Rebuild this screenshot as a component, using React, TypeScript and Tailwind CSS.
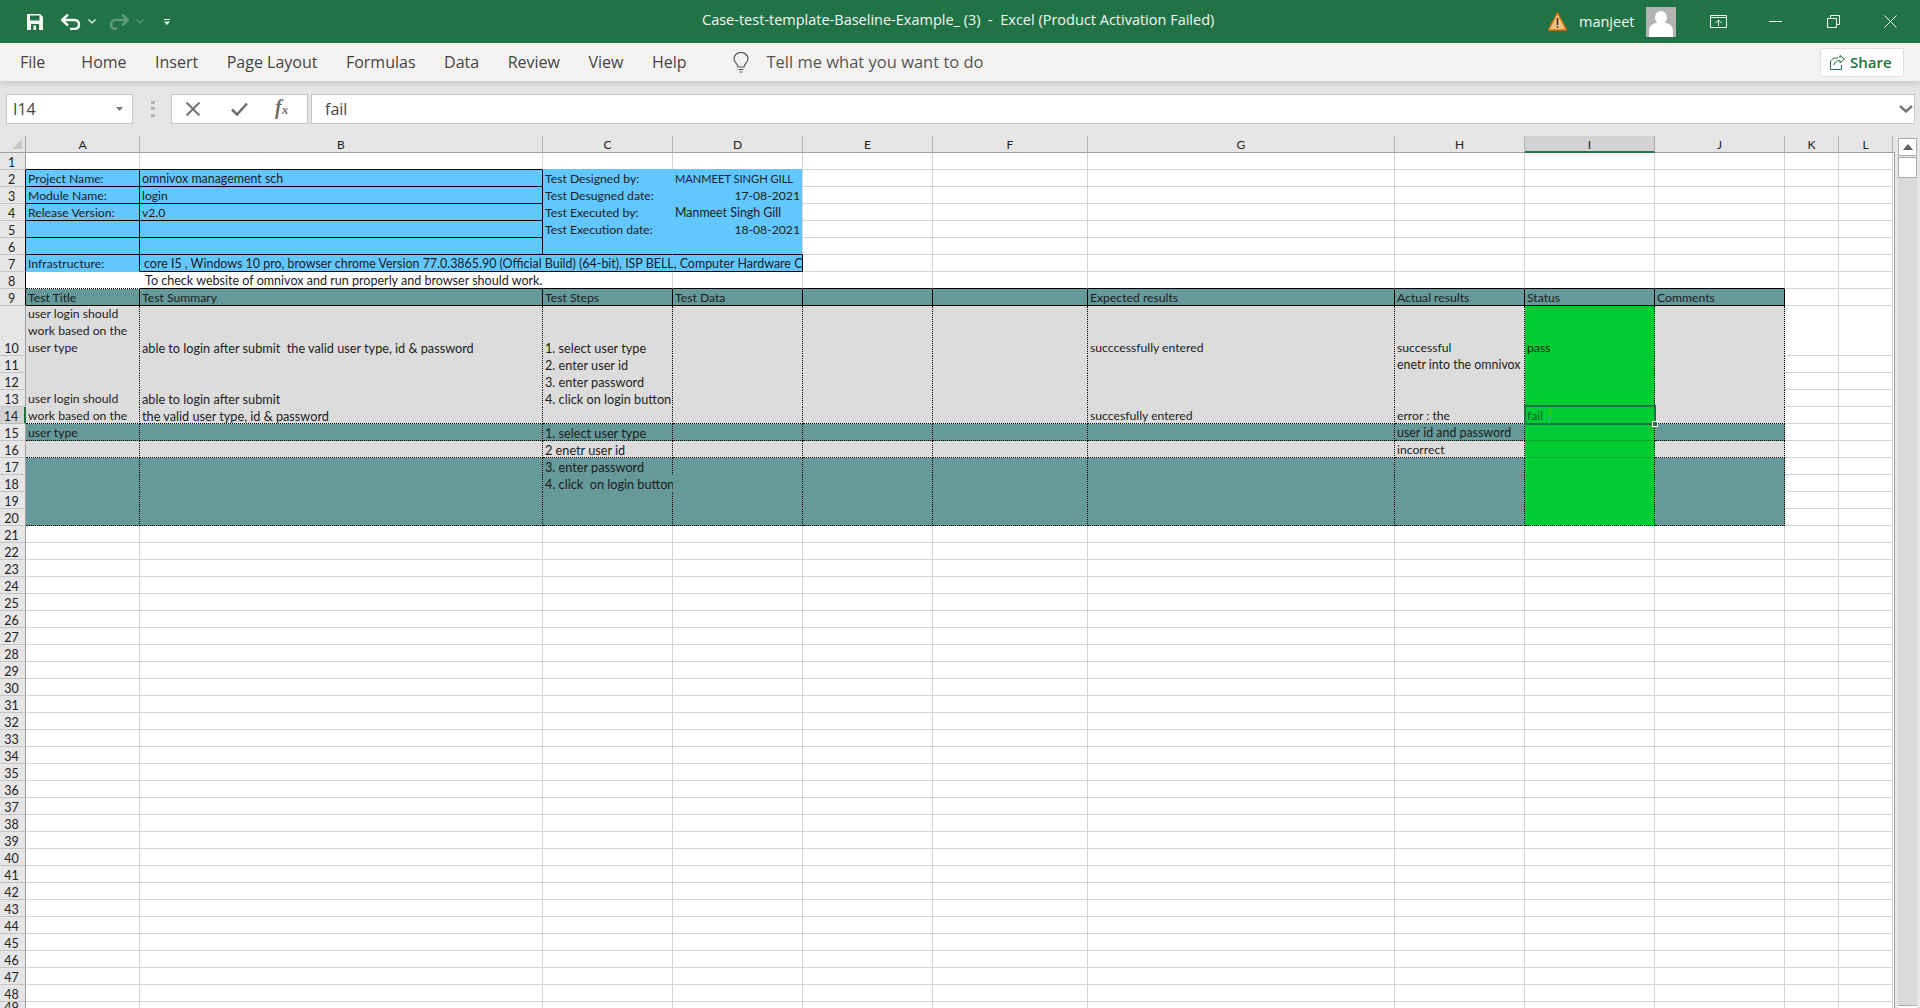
import React from "react";

const LETTERS = ["A", "B", "C", "D", "E", "F", "G", "H", "I", "J", "K", "L"];
const ROWS = Array.from({ length: 49 }, (_, i) => i + 1);

const BLUE = "bg-[#63c7ff]";
const TEAL = "bg-[#669999]";
const GRAY = "bg-[#dcdcdc]";
const GREEN = "bg-[#00cc33]";

type CellDef = { t?: string; right?: boolean; pad?: string; span?: string; clip?: boolean; size?: string };

const BIG = "text-[12.7px]";

const DATA: Record<string, CellDef> = {
  "2-0": { t: "Project Name:" },
  "3-0": { t: "Module Name:" },
  "4-0": { t: "Release Version:" },
  "7-0": { t: "Infrastructure:" },
  "2-1": { t: "omnivox management sch", size: "text-[12.4px]" },
  "3-1": { t: "login" },
  "4-1": { t: "v2.0" },
  "2-2": { t: "Test Designed by:" },
  "3-2": { t: "Test Desugned date:" },
  "4-2": { t: "Test Executed by:" },
  "5-2": { t: "Test Execution date:" },
  "2-3": { t: "MANMEET SINGH GILL", size: "text-[11.1px]" },
  "3-3": { t: "17-08-2021", right: true },
  "4-3": { t: "Manmeet Singh Gill", size: "text-[12.4px]" },
  "5-3": { t: "18-08-2021", right: true },
  "7-1": {
    t: "core I5 , Windows 10 pro, browser chrome Version 77.0.3865.90 (Official Build) (64-bit), ISP BELL, Computer Hardware C",
    pad: "pl-[4px]",
    span: "col-span-3",
    clip: true,
    size: "text-[12.45px]",
  },
  "8-1": {
    t: "To check website of omnivox and run properly and browser should work.",
    pad: "pl-[5px]",
    span: "col-span-2",
    size: "text-[12.55px]",
  },
  "9-0": { t: "Test Title" },
  "9-1": { t: "Test Summary" },
  "9-2": { t: "Test Steps" },
  "9-3": { t: "Test Data" },
  "9-6": { t: "Expected results" },
  "9-7": { t: "Actual results" },
  "9-8": { t: "Status" },
  "9-9": { t: "Comments" },
  "10-1": { t: "able to login after submit  the valid user type, id & password", size: BIG },
  "10-2": { t: "1. select user type", size: BIG },
  "10-6": { t: "succcessfully entered" },
  "10-7": { t: "successful" },
  "10-8": { t: "pass" },
  "11-2": { t: "2. enter user id", size: BIG },
  "11-7": { t: "enetr into the omnivox", size: "text-[12.4px]" },
  "12-2": { t: "3. enter password", size: BIG },
  "13-0": { t: "user login should" },
  "13-1": { t: "able to login after submit", size: BIG },
  "13-2": { t: "4. click on login button", size: BIG },
  "14-0": { t: "work based on the" },
  "14-1": { t: "the valid user type, id & password", size: BIG },
  "14-6": { t: "succesfully entered" },
  "14-7": { t: "error : the" },
  "14-8": { t: "fail" },
  "15-0": { t: "user type" },
  "15-2": { t: "1. select user type", size: BIG },
  "15-7": { t: "user id and password", size: "text-[12.4px]" },
  "16-2": { t: "2 enetr user id", size: BIG },
  "16-7": { t: "incorrect" },
  "17-2": { t: "3. enter password", size: BIG },
  "18-2": { t: "4. click  on login button", size: BIG },
};

const R_LIGHT = "border-r border-r-[#d4d4d4]";
const R_BLACK = "border-r border-r-black";
const R_DOT = "border-r border-r-black [border-right-style:dotted]";
const R_NONE = "border-r border-r-transparent";
const B_LIGHT = "border-b border-b-[#d4d4d4]";
const B_BLACK = "border-b border-b-black";
const B_DOT = "border-b border-b-black [border-bottom-style:dotted]";
const B_FAINT = "border-b border-b-[#0d8a32] [border-bottom-style:dotted]";
const B_NONE = "border-b border-b-transparent";
const B_BLUE = "border-b border-b-[#63c7ff]";

function bgOf(r: number, c: number) {
  if (r >= 2 && r <= 7 && c <= 3) return BLUE;
  if (r === 9 && c <= 9) return TEAL;
  if (r >= 10 && r <= 20 && c === 8) return GREEN;
  if (r >= 10 && r <= 14 && c <= 9) return GRAY;
  if (r === 16 && c <= 9) return GRAY;
  if (r >= 15 && r <= 20 && c <= 9) return TEAL;
  return "bg-white";
}

function rightOf(r: number, c: number) {
  if (r >= 2 && r <= 6) {
    if (c === 0 || c === 1) return R_BLACK;
    if (c === 2) return R_NONE;
  }
  if (r === 7 && c <= 3) return R_BLACK;
  if (r === 8 && c === 0) return R_NONE;
  if (r === 9 && c <= 9) return R_BLACK;
  if (r >= 10 && r <= 20 && c <= 9) {
    if (r === 18 && c === 2) return R_NONE;
    return R_DOT;
  }
  return R_LIGHT;
}

function bottomOf(r: number, c: number) {
  if (r === 1 && c <= 1) return B_BLACK;
  if (r === 1 && c <= 3) return B_BLUE;
  if (r >= 2 && r <= 6 && c <= 1) return B_BLACK;
  if (r >= 2 && r <= 5 && c <= 3) return B_NONE;
  if (r === 6 && c <= 3) return B_BLACK;
  if (r === 7 && c <= 3) return c === 0 ? B_NONE : B_BLACK;
  if (r === 8 && c === 0) return B_DOT;
  if (r === 8 && c <= 9) return B_BLACK;
  if (r === 9 && c <= 9) return B_BLACK;
  if (r >= 10 && r <= 13 && c <= 9) return B_NONE;
  if ((r === 14 || r === 15 || r === 16) && c === 8) return B_FAINT;
  if ((r === 14 || r === 15 || r === 16 || r === 20) && c <= 9) return B_DOT;
  if (r >= 17 && r <= 19 && c <= 9) return B_NONE;
  return B_LIGHT;
}

function Cell({ r, c }: { r: number; c: number }) {
  const d = DATA[`${r}-${c}`];
  const selected = r === 14 && c === 8;
  return (
    <div
      className={`relative flex items-end whitespace-pre leading-[14px] ${selected ? "z-10 text-[#0f5f2a]" : "text-[#1c1c1c]"} ${
        d?.size ?? "text-[12.2px]"
      } ${d?.span ?? ""} ${d?.clip ? "overflow-hidden" : ""} ${
        d?.right ? "justify-end pr-[2px]" : d?.pad ?? "pl-[2px]"
      } ${bgOf(r, c)} ${rightOf(r, c)} ${bottomOf(r, c)}`}
    >
      {r === 10 && c === 0 ? (
        <div className="flex flex-col gap-[3px]">
          <span>user login should</span>
          <span>work based on the</span>
          <span>user type</span>
        </div>
      ) : (
        d?.t
      )}
      {selected && (
        <>
          <div className="absolute left-[-1px] top-[-2px] h-[20px] w-[132px] border-2 border-[#217346]" />
          <div className="absolute left-[24px] top-[1px] h-[14px] w-px bg-[#d060a0]" />
          <div className="absolute bottom-[-4px] right-[-4px] h-[6px] w-[6px] border border-white bg-[#217346]" />
        </>
      )}
    </div>
  );
}

function Sheet() {
  const skip = new Set(["7-2", "7-3", "8-2"]);
  return (
    <div className="grid w-[1893px] shrink-0 grid-cols-[26px_114px_403px_130px_130px_130px_155px_307px_130px_130px_130px_54px_54px] grid-rows-[17px_repeat(9,17px)_50px_repeat(38,17px)] font-['Lato',sans-serif]">
      <div className="relative border-r border-b border-[#9f9f9f] bg-[#e6e6e6]">
        <svg className="absolute left-[12px] top-[3px]" width="10" height="10" viewBox="0 0 10 10">
          <path d="M10 0V10H0Z" fill="#c8c8c8" />
        </svg>
      </div>
      {LETTERS.map((l) => (
        <div
          key={l}
          className={`flex items-center justify-center pt-[2px] text-[12px] text-[#222] ${
            l === "I"
              ? "border-r border-r-[#a8a8a8] border-b-2 border-b-[#217346] bg-[#d2d2d2]"
              : "border-r border-r-[#b4b4b4] border-b border-b-[#9f9f9f] bg-[#e6e6e6]"
          }`}
        >
          {l}
        </div>
      ))}
      {ROWS.map((r) => (
        <React.Fragment key={r}>
          <div
            className={`flex items-end justify-center pr-[2px] text-[12.5px] leading-[12px] text-[#222] ${
              r === 14
                ? "border-r-2 border-r-[#217346] border-b border-b-[#bcbcbc] bg-[#d2d2d2] text-[#1d6b3f]"
                : `border-b border-b-[#c4c4c4] bg-[#e6e6e6] ${
                    r >= 2 && r <= 9 ? "border-r border-r-black" : "border-r border-r-[#9f9f9f]"
                  }`
            }`}
          >
            {r}
          </div>
          {LETTERS.map((_, c) => (skip.has(`${r}-${c}`) ? null : <Cell key={c} r={r} c={c} />))}
        </React.Fragment>
      ))}
    </div>
  );
}

function TitleBar() {
  return (
    <div className="flex h-[43px] items-center bg-[#217346] font-['Open_Sans',sans-serif] text-white">
      <svg className="ml-[27px] shrink-0" width="16" height="16" viewBox="0 0 16 16">
        <path d="M0 0H13L16 3V16H0Z" fill="#f4f6f4" />
        <path d="M3 1.5H12.5V6.5H3Z" fill="#217346" />
        <path d="M4 10H12V16H4Z" fill="#217346" />
        <path d="M6.5 11.5H9V16H6.5Z" fill="#f4f6f4" />
      </svg>
      <svg className="ml-[18px] shrink-0" width="20" height="16" viewBox="0 0 20 16" fill="none">
        <path d="M1 6H13C16.5 6 18 8 18 10.5S16.5 15 13 15H9" stroke="#f4f6f4" strokeWidth="2.4" />
        <path d="M7 0.5L1 6L7 11.5" stroke="#f4f6f4" strokeWidth="2.4" />
      </svg>
      <svg className="ml-[7px] shrink-0" width="8" height="5" viewBox="0 0 8 5" fill="none">
        <path d="M0.5 0.5L4 4L7.5 0.5" stroke="#f4f6f4" strokeWidth="1.2" />
      </svg>
      <svg className="ml-[13px] shrink-0 opacity-30" width="20" height="16" viewBox="0 0 20 16" fill="none">
        <path d="M19 6H7C3.5 6 2 8 2 10.5S3.5 15 7 15H8" stroke="#f4f6f4" strokeWidth="2.4" />
        <path d="M13 0.5L19 6L13 11.5" stroke="#f4f6f4" strokeWidth="2.4" />
      </svg>
      <svg className="ml-[7px] shrink-0 opacity-30" width="8" height="5" viewBox="0 0 8 5" fill="none">
        <path d="M0.5 0.5L4 4L7.5 0.5" stroke="#f4f6f4" strokeWidth="1.2" />
      </svg>
      <svg className="ml-[20px] shrink-0" width="6" height="6" viewBox="0 0 6 6">
        <path d="M0 0H6V1H0ZM0 2.5H6L3 6Z" fill="#f4f6f4" />
      </svg>
      <div className="ml-[532px] mb-[3px] whitespace-pre text-[14.5px] leading-[20px] text-[#f2f7f3]">
        Case-test-template-Baseline-Example_ (3)  -  Excel (Product Activation Failed)
      </div>
      <div className="ml-auto flex items-center">
        <svg width="19" height="19" viewBox="0 0 19 19">
          <path d="M9.5 1L18.5 18H0.5Z" fill="#f6c27a" stroke="#d9720e" strokeWidth="1.4" />
          <path d="M8.7 6H10.3V13H8.7ZM8.7 14.3H10.3V16H8.7Z" fill="#333" />
        </svg>
        <span className="ml-[12px] w-[54px] whitespace-nowrap text-[14.5px] leading-[20px] text-[#f2f7f3]">manjeet</span>
        <div className="relative ml-[13px] h-[30px] w-[30px] overflow-hidden bg-[#b3b3b3]">
          <div className="absolute left-[9px] top-[4px] h-[13px] w-[12px] rounded-full bg-white" />
          <div className="absolute left-[3px] top-[16px] h-[16px] w-[24px] rounded-t-[8px] bg-white" />
        </div>
        <svg className="ml-[34px]" width="17" height="13" viewBox="0 0 17 13" fill="none">
          <path d="M0.5 0.5H16.5V12.5H0.5Z" stroke="#f2f7f3" />
          <path d="M0.5 2.5H16.5" stroke="#f2f7f3" />
          <path d="M8.5 11V5M5.5 8L8.5 5L11.5 8" stroke="#f2f7f3" />
        </svg>
        <div className="ml-[42px] h-px w-[13px] bg-[#f2f7f3]" />
        <svg className="ml-[45px]" width="13" height="13" viewBox="0 0 13 13" fill="none">
          <path d="M0.5 3.5H9.5V12.5H0.5Z" stroke="#f2f7f3" />
          <path d="M3.5 3.5V0.5H12.5V9.5H9.5" stroke="#f2f7f3" />
        </svg>
        <svg className="ml-[44px] mr-[23px]" width="13" height="13" viewBox="0 0 13 13" fill="none">
          <path d="M0.5 0.5L12.5 12.5M12.5 0.5L0.5 12.5" stroke="#f2f7f3" />
        </svg>
      </div>
    </div>
  );
}

function Ribbon() {
  const tabs = ["Home", "Insert", "Page Layout", "Formulas", "Data", "Review", "View", "Help"];
  return (
    <div className="relative z-20 flex h-[38px] items-center bg-[#f3f2f1] font-['Open_Sans',sans-serif] text-[16px] text-[#444] shadow-[0_3px_6px_rgba(0,0,0,0.13)]">
      <span className="ml-[20px]">File</span>
      <div className="ml-[36px] flex gap-[28.5px]">
        {tabs.map((t) => (
          <span key={t}>{t}</span>
        ))}
      </div>
      <svg className="ml-[46px]" width="16" height="21" viewBox="0 0 16 21" fill="none">
        <path
          d="M5 15C5 12 1 10.500 1 6.500A7 6 0 0 1 15 6.500C15 10.500 11 12 11 15ZM5.500 17.500H10.500M6.500 20H9.500"
          stroke="#555"
          strokeWidth="1.2"
        />
      </svg>
      <span className="ml-[18px] text-[16.5px] text-[#555]">Tell me what you want to do</span>
      <div className="ml-auto mr-[16px] flex h-[29px] w-[84px] items-center rounded-[2px] border border-[#e1dfdd] bg-white text-[15px] font-semibold text-[#217346]">
        <svg className="ml-[9px]" width="15" height="15" viewBox="0 0 15 15" fill="none">
          <path d="M8 3H4L0.500 6V14.500H11.500V10" stroke="#217346" />
          <path d="M4 10C4.500 7 7 5.500 10 5.500V8L14.500 4L10 0.500V3" stroke="#217346" />
        </svg>
        <span className="ml-[5px]">Share</span>
      </div>
    </div>
  );
}

function FormulaBar() {
  return (
    <div className="flex h-[55px] items-center bg-[#e6e6e6] py-[1px] font-['Open_Sans',sans-serif] text-[16px] text-[#444]">
      <div className="ml-[6px] flex h-[30px] w-[127px] items-center justify-between border border-[#c6c6c6] bg-white pl-[6px] pr-[9px]">
        <span>I14</span>
        <svg width="7" height="4" viewBox="0 0 7 4">
          <path d="M0 0H7L3.500 4Z" fill="#777" />
        </svg>
      </div>
      <div className="ml-[18px] flex h-[16px] w-[4px] flex-col justify-between">
        <div className="h-[3px] w-[4px] bg-[#b5b5b5]" />
        <div className="h-[3px] w-[4px] bg-[#b5b5b5]" />
        <div className="h-[3px] w-[4px] bg-[#b5b5b5]" />
      </div>
      <div className="ml-[16px] flex h-[30px] w-[137px] items-center border border-[#c6c6c6] bg-white">
        <svg className="ml-[13px]" width="16" height="16" viewBox="0 0 16 16" fill="none">
          <path d="M1.500 1.500L14.500 14.500M14.500 1.500L1.500 14.500" stroke="#707070" strokeWidth="1.8" />
        </svg>
        <svg className="ml-[30px]" width="17" height="14" viewBox="0 0 17 14" fill="none">
          <path d="M1 7.500L6 12.500L16 1.500" stroke="#707070" strokeWidth="2.6" />
        </svg>
        <span className="ml-[27px] font-['Liberation_Serif',serif] text-[20px] font-bold italic leading-[20px] text-[#707070]">
          f<span className="text-[13px]">x</span>
        </span>
      </div>
      <div className="ml-[3px] flex h-[30px] w-[1604px] items-center justify-between border border-[#c6c6c6] bg-white pl-[13px] pr-[1px]">
        <span>fail</span>
        <svg width="14" height="8" viewBox="0 0 14 8" fill="none">
          <path d="M1 1L7 6.500L13 1" stroke="#777" strokeWidth="2.4" />
        </svg>
      </div>
    </div>
  );
}

function ScrollBar() {
  return (
    <>
      <div className="flex w-[2px] shrink-0 flex-col bg-[#e6e6e6]">
        <div className="h-[16px] shrink-0" />
        <div className="h-px shrink-0 bg-[#9f9f9f]" />
        <div className="grow border-r border-r-[#a0a0a0] bg-white" />
      </div>
      <div className="flex w-[25px] shrink-0 flex-col bg-[#e6e6e6] pl-[3px] pt-[2px]">
        <div className="flex h-[18px] w-[19px] shrink-0 items-center justify-center border border-[#ababab] bg-white">
          <svg width="10" height="6" viewBox="0 0 10 6">
            <path d="M5 0L10 6H0Z" fill="#606060" />
          </svg>
        </div>
        <div className="h-px w-[19px] shrink-0 bg-[#e6e6e6]" />
        <div className="h-[21px] w-[19px] shrink-0 border border-[#ababab] bg-white" />
        <div className="w-[19px] grow bg-[#dadada]" />
        <div className="h-[3px] w-[19px] shrink-0 border-t border-[#ababab] bg-white" />
      </div>
    </>
  );
}

export default function App() {
  return (
    <div className="h-[1008px] w-[1920px] overflow-hidden bg-white">
      <TitleBar />
      <Ribbon />
      <FormulaBar />
      <div className="flex h-[872px] overflow-hidden">
        <Sheet />
        <ScrollBar />
      </div>
    </div>
  );
}
